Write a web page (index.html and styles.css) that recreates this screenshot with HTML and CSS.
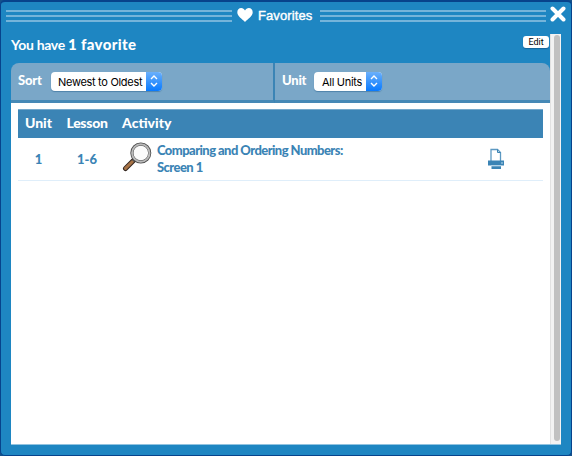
FILE: index.html
```html
<!DOCTYPE html>
<html lang="en">
<head>
<meta charset="utf-8">
<title>Favorites</title>
<link rel="stylesheet" href="styles.css">
</head>
<body>
<main class="window">
  <header class="titlebar">
    <span class="rules"><i></i><i></i><i></i></span>
    <svg class="heart" viewBox="0 0 16 14"><path d="M8 14C5 11 .3 8.200.3 4.300C.3 1.800 1.900 0 4.200 0C5.900 0 7.200.9 8 2.400C8.800.9 10.100 0 11.800 0C14.100 0 15.700 1.800 15.700 4.300C15.700 8.200 11 11 8 14Z"/></svg>
    <h1 class="title">Favorites</h1>
    <span class="rules"><i></i><i></i><i></i></span>
    <svg class="close" viewBox="0 0 16 16"><path d="M2.500 2.500 13.500 13.500M13.500 2.500 2.500 13.500"/></svg>
  </header>
  <div class="viewport">
    <div class="content">
      <div class="summary">
        <p class="count"><span class="have">You have</span><b class="number">1 favorite</b></p>
        <button class="edit">Edit</button>
      </div>
      <div class="filters">
        <div class="filter sort">
          <span class="label">Sort</span>
          <span class="select"><span class="value newest">Newest to Oldest</span><span class="arrows"><svg viewBox="0 0 16 18"><path d="M5 7 8 4 11 7M5 11 8 14 11 11"/></svg></span></span>
        </div>
        <div class="filter unit">
          <span class="label">Unit</span>
          <span class="select"><span class="value">All Units</span><span class="arrows"><svg viewBox="0 0 16 18"><path d="M5 7 8 4 11 7M5 11 8 14 11 11"/></svg></span></span>
        </div>
      </div>
      <div class="table">
        <div class="row head"><span class="c">Unit</span><span class="c lesson">Lesson</span><span class="act">Activity</span></div>
        <div class="row item">
          <span class="c">1</span><span class="c">1-6</span>
          <svg class="lens" viewBox="0 0 30 30">
            <path d="M11.500 18.500 3.500 26.500" stroke="#33251e" stroke-width="5" stroke-linecap="round"/>
            <path d="M10.500 19.500 3.500 26.400" stroke="#a87447" stroke-width="3" stroke-linecap="round"/>
            <path d="M13 17 11 19" stroke="#555" stroke-width="3"/>
            <circle cx="18.800" cy="11" r="8.900" fill="#fbfbfb" stroke="#4d4d4d" stroke-width="3.200"/>
            <circle cx="18.800" cy="11" r="8.700" fill="none" stroke="#b9b9b9" stroke-width="2"/>
          </svg>
          <a class="name"><span class="l1">Comparing and Ordering Numbers:</span><span class="l2">Screen 1</span></a>
          <svg class="printer" viewBox="0 0 18 22">
            <path d="M4 13V1.500H10.500L13.500 4.500V13" fill="#fff" stroke="#5d99c2" stroke-width="1.300"/>
            <path d="M10.500 1.500V4.500H13.500" fill="none" stroke="#3b84b5"/>
            <path d="M1 12.500H17V17.500H1Z" fill="#3b84b5"/>
            <path d="M14 15H16M4 17.700H14.500" stroke="#b9d8eb"/>
            <path d="M4.500 18.200H14V21H4.500Z" fill="#3b84b5"/>
          </svg>
        </div>
      </div>
    </div>
    <div class="scrollbar"><div class="thumb"></div></div>
  </div>
</main>
</body>
</html>
```
FILE: styles.css
```css
* { box-sizing: border-box; }
body { margin: 0; background: #15518a; font-family: Lato, "Liberation Sans", sans-serif; }
.window { width: 572px; height: 456px; background: #1e86c2; border: 1px solid #07438c; border-top-width: 2px; border-radius: 5px; overflow: hidden; }
.titlebar { height: 32px; padding: 0 4px 0 5px; display: flex; align-items: flex-start; }
.rules { flex: none; width: 226px; margin-top: 8px; display: flex; flex-direction: column; gap: 3px; }
.rules i { height: 2px; background: #75b4da; }
.heart { width: 16px; height: 14px; margin: 6px 5px 0 5px; fill: #fff; flex: none; }
.title { margin: 6px 0 0; width: 62px; flex: none; color: #fff; font: 13px/16px "Liberation Sans", sans-serif; letter-spacing: .1px; -webkit-text-stroke: .4px #fff; }
.close { width: 16px; height: 16px; margin: 4px 0 0 4px; flex: none; fill: none; stroke: #fff; stroke-width: 4; stroke-linecap: round; }
.viewport { display: flex; width: 550px; height: 411px; margin-left: 10px; border-bottom: 1px solid #91c3e0; }
.content { width: 539px; background: #fff; }
.summary { height: 29px; background: #1e86c2; display: flex; justify-content: space-between; }
.count { margin: 0; color: #fff; display: flex; gap: 3px; line-height: 21px; white-space: nowrap; }
.have { font-size: 14px; font-weight: 700; width: 54px; letter-spacing: -.3px; }
.number { font-size: 15px; font-weight: 900; letter-spacing: .35px; }
.edit { width: 26px; height: 12px; margin: 2px 1px 0 0; padding: 0; border: 0; border-radius: 3px; background: #fff; box-shadow: 0 1px 1px #17659a; font: 9px/12px Roboto, sans-serif; color: #000; }
.filters { height: 40px; display: flex; background: linear-gradient(#1e86c2 50%, #fff 50%); }
.filter { height: 40px; padding-left: 7px; background: #7aa7c8; border-bottom: 3px solid #4689b6; display: flex; align-items: center; color: #fff; }
.sort { width: 264px; border-right: 2px solid #3b84b5; border-top-left-radius: 8px; }
.unit { width: 275px; border-top-right-radius: 8px; }
.label { width: 33px; margin-top: -3px; font-size: 13px; font-weight: 900; line-height: 16px; letter-spacing: -.2px; }
.unit .label { width: 32px; }
.select { height: 19px; display: flex; border-radius: 4px; overflow: hidden; background: #fff; color: #000; font: 11px/20px Inter, sans-serif; box-shadow: 0 1px 1px #4f83aa; }
.value { width: 52px; padding-left: 8px; white-space: nowrap; letter-spacing: -.3px; }
.newest { width: 95px; padding-left: 7px; }
.arrows { width: 16px; height: 19px; background: linear-gradient(#6bb0fb, #087aff); }
.arrows svg { display: block; width: 16px; height: 18px; fill: none; stroke: #fff; stroke-width: 1.400; }
.table { margin: 6px 7px 0; }
.row { display: grid; grid-template-columns: 41px 56px 1fr; align-items: center; color: #3b84b5; font-weight: 900; }
.head { height: 29px; padding-bottom: 3px; background: #3b84b5; border-top: 1px solid #75a9cc; color: #fff; font-size: 14px; }
.lesson { letter-spacing: -.3px; }
.c { text-align: center; }
.act { padding-left: 7px; }
.item { grid-template-columns: 41px 56px 42px 330px 18px; height: 43px; padding-bottom: 1px; border-bottom: 1px solid #dfeefa; font-size: 13px; }
.lens { width: 30px; height: 30px; margin: -3px 0 0 7px; fill: none; }
.name { font-size: 13px; line-height: 17px; white-space: nowrap; }
.name span { display: block; letter-spacing: -.56px; }
.printer { width: 18px; height: 22px; }
.scrollbar { width: 11px; padding: 1px 2px 2px 3px; background: #f3f3f3; border-left: 1px solid #e2e2e2; }
.thumb { width: 6px; height: 406px; border-radius: 3px; background: #c1c1c1; }
```
